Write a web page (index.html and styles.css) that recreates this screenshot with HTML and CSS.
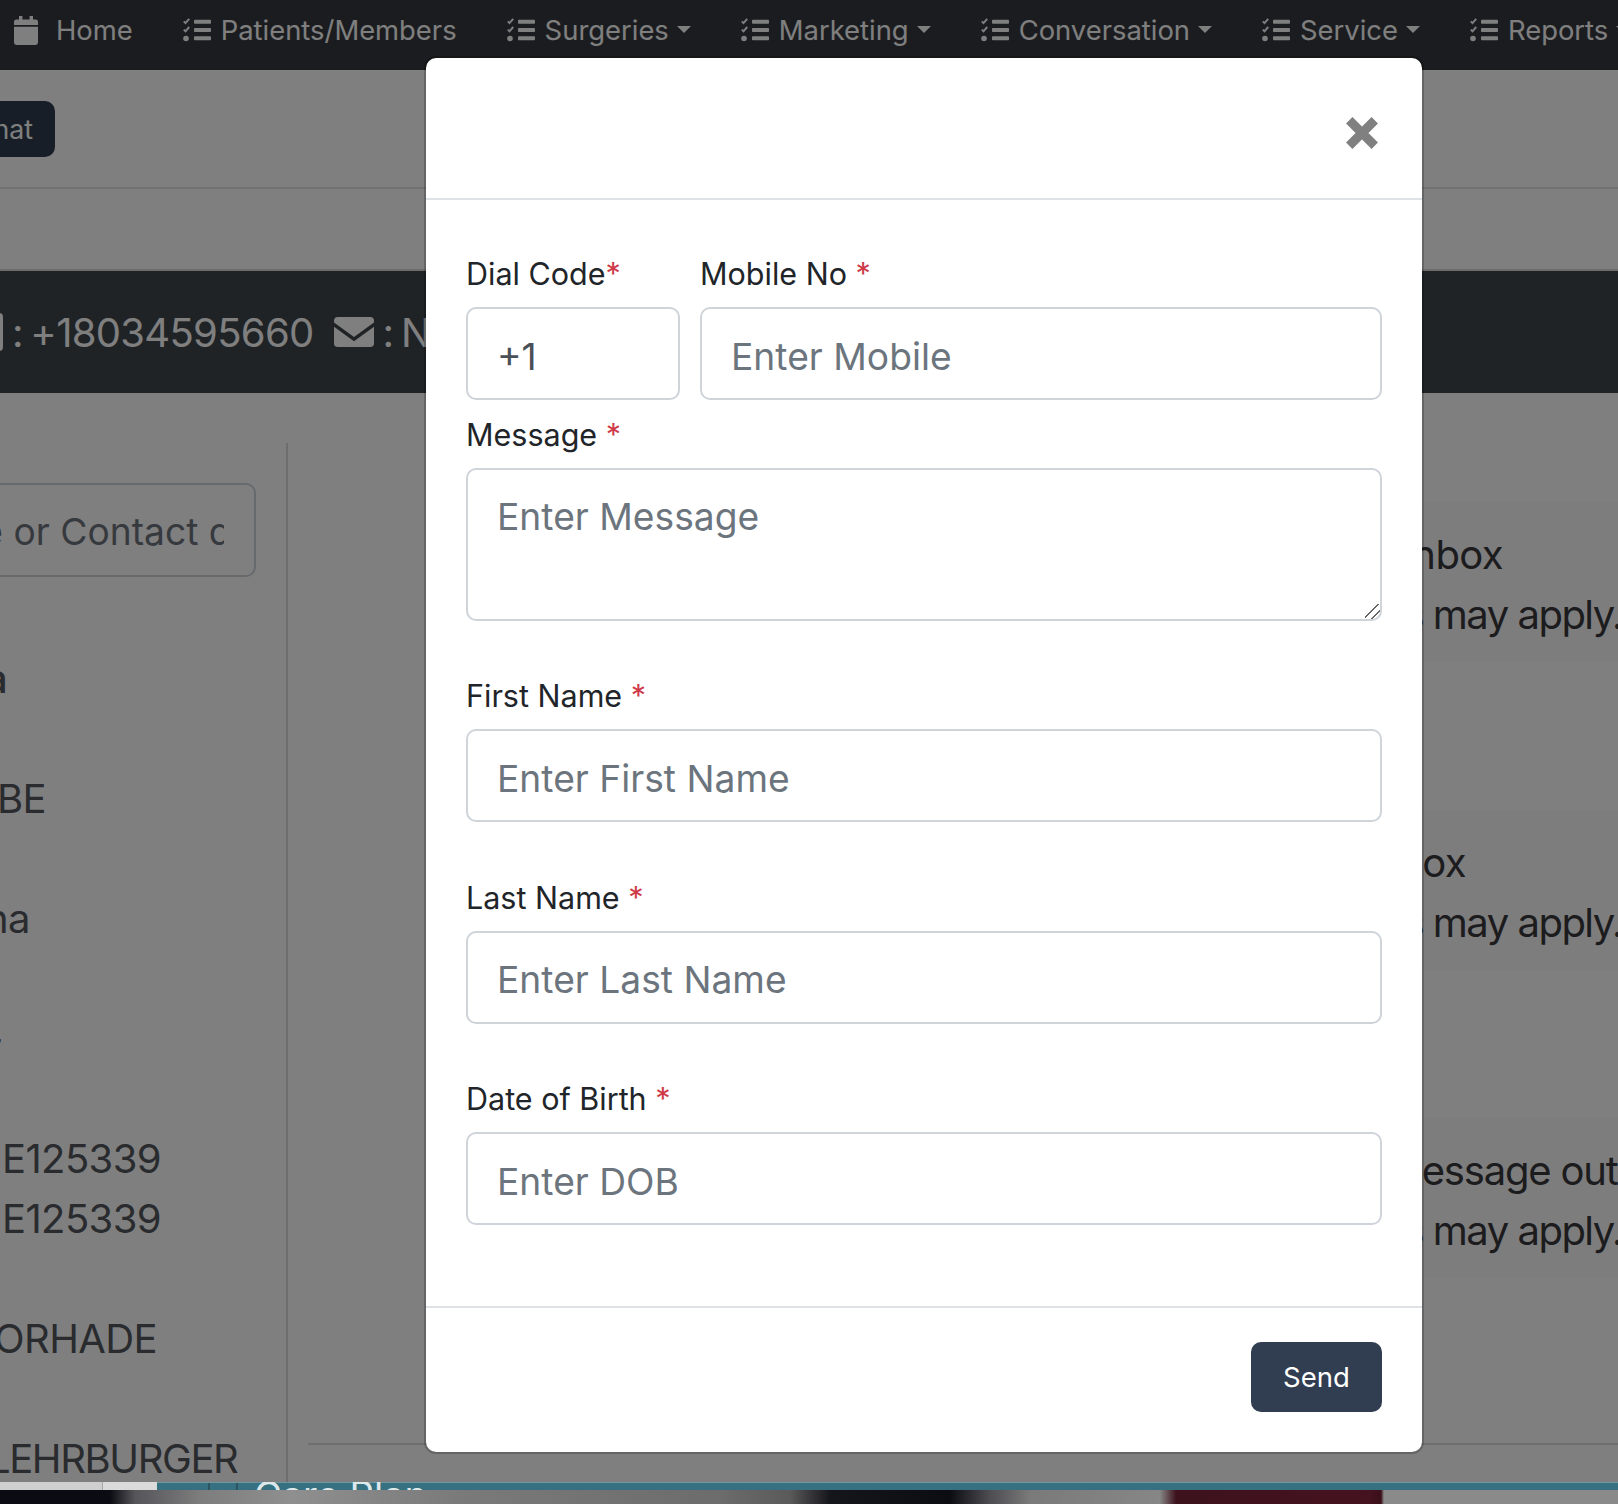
FILE: index.html
```html
<!DOCTYPE html>
<html lang="en">
<head>
<meta charset="utf-8">
<title>Chat</title>
<link rel="stylesheet" href="styles.css">
</head>
<body>
<svg class="defs" width="0" height="0" aria-hidden="true">
  <symbol id="tasks" viewBox="0 0 28 24">
    <path d="M.8 3.400l1.700 1.700L6.200.8" fill="none" stroke="currentColor" stroke-width="2"/>
    <path d="M.8 11.600l1.700 1.700L6.200 9" fill="none" stroke="currentColor" stroke-width="2"/>
    <circle cx="3" cy="20.500" r="2.800" fill="currentColor"/>
    <rect x="11" y="1.800" width="17" height="4" rx=".8" fill="currentColor"/>
    <rect x="11" y="10" width="17" height="4" rx=".8" fill="currentColor"/>
    <rect x="11" y="18.200" width="17" height="4" rx=".8" fill="currentColor"/>
  </symbol>
</svg>
<div class="page">
  <div class="app">
    <nav class="nav">
      <a class="nav-item nav-home">
        <svg class="ico-cal" viewBox="0 0 24 29"><path fill="currentColor" d="M5 0h3.400v3.400h7.200V0H19v3.400h2.600A2.400 2.400 0 0 1 24 5.800V9H0V5.800a2.400 2.400 0 0 1 2.400-2.400H5zM0 10.800h24v15.800a2.400 2.400 0 0 1-2.400 2.400H2.400A2.400 2.400 0 0 1 0 26.600z"/></svg>
        <span>Home</span>
      </a>
      <a class="nav-item"><svg class="ico-tasks"><use href="#tasks"/></svg><span>Patients/Members</span></a>
      <a class="nav-item"><svg class="ico-tasks"><use href="#tasks"/></svg><span>Surgeries</span><i class="caret"></i></a>
      <a class="nav-item"><svg class="ico-tasks"><use href="#tasks"/></svg><span>Marketing</span><i class="caret"></i></a>
      <a class="nav-item"><svg class="ico-tasks"><use href="#tasks"/></svg><span>Conversation</span><i class="caret"></i></a>
      <a class="nav-item"><svg class="ico-tasks"><use href="#tasks"/></svg><span>Service</span><i class="caret"></i></a>
      <a class="nav-item"><svg class="ico-tasks"><use href="#tasks"/></svg><span>Reports</span><i class="caret"></i></a>
    </nav>

    <div class="toolbar"><button class="chat-btn">New Chat</button></div>

    <div class="contact-bar">
      <svg class="ico-mobile" viewBox="0 0 23 38"><rect width="23" height="38" rx="4" fill="currentColor"/></svg>
      <span class="contact-phone">: +18034595660</span>
      <svg class="ico-mail" viewBox="0 0 40 30"><path fill="currentColor" d="M3.800 0h32.400A3.800 3.800 0 0 1 40 3.800v1.600L20 20 0 5.400V3.800A3.800 3.800 0 0 1 3.800 0zM0 9.700l20 14.600L40 9.700v16.500a3.800 3.800 0 0 1-3.800 3.800H3.800A3.800 3.800 0 0 1 0 26.200z"/></svg>
      <span class="contact-mail">: N/A</span>
    </div>

    <div class="content">
      <aside class="sidebar">
        <input class="search" placeholder="Search Name or Contact details" readonly>
        <div class="list">
          <div class="row row-first row-bold shift-a">a</div>
          <div class="row shift-be">BE</div>
          <div class="row shift-na">na</div>
          <div class="row shift-dash">-</div>
          <div class="row shift-e">E125339</div>
          <div class="row row-sub shift-e">E125339</div>
          <div class="row shift-o">ORHADE</div>
          <div class="row shift-l">LEHRBURGER</div>
        </div>
      </aside>
      <main class="main">
        <div class="card">
          <p class="line end-inbox">Message sent to inbox</p>
          <p class="line end-apply">Message and data rates may apply.</p>
        </div>
        <div class="card">
          <p class="line end-box">Message sent to inbox</p>
          <p class="line end-apply">Message and data rates may apply.</p>
        </div>
        <div class="card">
          <p class="line end-outs">You cannot send a message outside</p>
          <p class="line end-apply">Message and data rates may apply.</p>
        </div>
        <hr class="main-rule">
      </main>
    </div>

    <div class="backdrop"></div>

    <section class="modal">
      <header class="modal-header">
        <svg class="ico-close" viewBox="0 0 32 32"><path d="M4 4l24 24M28 4L4 28" fill="none" stroke="currentColor" stroke-width="8.500"/></svg>
      </header>
      <form class="modal-body">
        <div class="pair">
          <div class="field field-dial">
            <label class="label">Dial Code<span class="req">*</span></label>
            <input class="control" value="+1">
          </div>
          <div class="field field-mobile">
            <label class="label">Mobile No <span class="req">*</span></label>
            <input class="control" placeholder="Enter Mobile">
          </div>
        </div>
        <div class="field field-message">
          <label class="label">Message <span class="req">*</span></label>
          <textarea class="control control-area" placeholder="Enter Message"></textarea>
        </div>
        <div class="field field-spaced">
          <label class="label">First Name <span class="req">*</span></label>
          <input class="control" placeholder="Enter First Name">
        </div>
        <div class="field field-spaced">
          <label class="label">Last Name <span class="req">*</span></label>
          <input class="control" placeholder="Enter Last Name">
        </div>
        <div class="field field-spaced">
          <label class="label">Date of Birth <span class="req">*</span></label>
          <input class="control" placeholder="Enter DOB">
        </div>
      </form>
      <footer class="modal-footer"><button class="send" type="button">Send</button></footer>
    </section>
  </div>

  <div class="strip">
    <div class="strip-a"></div>
    <div class="strip-b"></div>
    <div class="strip-teal">
      <span class="strip-icon"></span>
      <span class="strip-text">Care Plan</span>
    </div>
  </div>
  <div class="photo"></div>
</div>
</body>
</html>
```
FILE: styles.css
```css
* { box-sizing: border-box; }
html, body { margin: 0; height: 100%; overflow: hidden; }
body { font-family: Inter, "Liberation Sans", sans-serif; color: #212529; background: #fff; }
.defs { position: absolute; }

.page { width: 1618px; height: 1504px; display: flex; flex-direction: column; overflow: hidden; }
.app { position: relative; height: 1482px; flex: none; overflow: hidden; background: #fff; }

/* nav */
.nav { height: 70px; background: #36383f; color: #fff; display: flex; align-items: center; gap: 50px; padding: 0 0 10px 14px; white-space: nowrap; font-size: 27.4px; }
.nav-item { display: flex; align-items: center; gap: 10px; flex: none; }
.nav-home { gap: 18px; }
.ico-cal { width: 24px; height: 29px; }
.ico-tasks { width: 28px; height: 24px; }
.caret { width: 0; height: 0; border-left: 7px solid transparent; border-right: 7px solid transparent; border-top: 7.500px solid currentColor; margin-left: -2px; margin-top: -2px; }

/* toolbar */
.toolbar { height: 119px; border-bottom: 2px solid #e2e2e2; padding-top: 31px; }
.chat-btn { height: 56px; width: 160px; margin-left: -105px; border: 0; border-radius: 10px; background: #313d50; color: #fff; font: 26.67px Inter, sans-serif; text-align: right; padding: 0 22px 0 0; display: block; }

/* contact */
.contact-bar { margin-top: 80px; height: 124px; border-top: 2px solid #d8d8d8; background: #3f464c; color: #fff; display: flex; align-items: center; font-size: 40px; letter-spacing: -.7px; word-spacing: -3px; white-space: nowrap; }
.ico-mobile { width: 23px; height: 38px; margin-left: -20px; flex: none; }
.contact-phone { margin-left: 9px; }
.ico-mail { width: 40px; height: 30px; margin-left: 20px; flex: none; }
.contact-mail { margin-left: 9px; }

/* content */
.content { display: flex; margin-top: 50px; height: 1039px; }
.sidebar { width: 288px; flex: none; border-right: 2px solid #dcdcdc; padding-top: 40px; }
.search { display: block; width: 522px; height: 94px; margin-left: -266px; border: 2px solid #ced4da; border-radius: 10px; padding: 3px 30px 0; font: 37.200px Inter, sans-serif; background: #fff; outline: 0; }
.search::placeholder { color: #6c757d; opacity: 1; }
.list { margin-top: 72px; font-size: 40px; letter-spacing: -.6px; line-height: 60px; color: #53575c; white-space: nowrap; }
.row { margin-top: 60px; }
.row-first, .row-sub { margin-top: 0; }
.row-bold { font-weight: 500; }
.shift-a { margin-left: -15px; }
.shift-be { margin-left: -3px; }
.shift-na { margin-left: -15px; }
.shift-dash { margin-left: -15px; }
.shift-e { margin-left: 2px; }
.shift-o { margin-left: -6px; }
.shift-l { margin-left: -12px; letter-spacing: -1.4px; }

.main { flex: 1; min-width: 0; margin-left: 20px; padding-top: 59px; }
.card { height: 160px; margin-left: 200px; padding: 23px 0 0; background: #fafafb; margin-bottom: 148px; }
.line { margin: 0; font-size: 40px; letter-spacing: -.6px; line-height: 60px; white-space: nowrap; display: flex; justify-content: flex-end; color: #38383c; }
.end-apply { margin-right: -4px; letter-spacing: -1.5px; }
.end-inbox { margin-right: 115px; }
.end-box { margin-right: 152px; }
.end-outs { margin-right: -73px; letter-spacing: -1.2px; }
.main-rule { margin: 165px 0 0; border: 0; border-top: 2px solid #dcdcdc; }

/* modal */
.backdrop { position: absolute; inset: 0; background: rgba(0, 0, 0, .5); }
.modal { position: absolute; left: 424px; top: 56px; width: 1000px; height: 1398px; display: flex; flex-direction: column; background: #fff; background-clip: padding-box; border: 2px solid rgba(0, 0, 0, .2); border-radius: 12px; }
.modal-header { height: 142px; flex: none; border-bottom: 2px solid #dee2e6; display: flex; align-items: center; justify-content: flex-end; padding: 10px 43px 0 0; color: #808080; }
.ico-close { width: 34px; height: 34px; }
.modal-body { flex: 1; padding: 54px 40px 0; }
.pair { display: flex; gap: 20px; }
.field-dial { width: 214px; flex: none; }
.field-mobile { flex: 1; }
.field-message { margin-top: 15px; }
.field-spaced { margin-top: 55.400px; }
.label { display: block; height: 40px; margin-bottom: 13px; font-size: 30.500px; line-height: 40px; color: #212529; }
.req { color: #cf3a48; }
.control { display: block; width: 100%; height: 93px; border: 2px solid #ced4da; border-radius: 10px; background: #fff; padding: 5px 29px 0; font: 37.200px Inter, sans-serif; color: #495057; outline: 0; }
.control::placeholder { color: #6c757d; opacity: 1; }
.control-area { height: 153px; padding: 22px 29px; line-height: 50px; resize: vertical; }
.control-area::-webkit-resizer { background: linear-gradient(135deg, transparent 42%, #666 42% 49%, transparent 49% 68%, #666 68% 75%, transparent 75%); }
.modal-footer { height: 146px; flex: none; border-top: 2px solid #dee2e6; display: flex; justify-content: flex-end; align-items: flex-start; padding: 34px 40px 0 0; }
.send { width: 131px; height: 70px; border: 0; border-radius: 10px; background: #313d50; color: #fff; font: 27.500px Inter, sans-serif; }

/* bottom */
.strip { height: 8px; flex: none; display: flex; overflow: hidden; }
.strip-a { width: 103px; background: #cfcfcf; border-right: 1px solid #a8a8a8; }
.strip-b { width: 54px; background: #dadada; }
.strip-teal { flex: 1; background: #367181; border-top: 1px solid #6f97a2; color: #dde8eb; display: flex; align-items: flex-start; padding-left: 51px; }
.strip-icon { width: 30px; height: 8px; border-left: 2px solid #2c5560; border-right: 2px solid #2c5560; flex: none; }
.strip-text { margin: -2px 0 0 16px; font-size: 38px; line-height: 28px; white-space: nowrap; }
.photo { flex: 1; background: linear-gradient(90deg, #0b0b13 0, #0b0b13 110px, #55555a 135px, #7d7d7d 200px, #8f8f8f 290px, #7a7a7a 460px, #6c6c6c 720px, #5a5a5a 790px, #15151c 830px, #0c0c13 950px, #4d4d52 990px, #7a7a7a 1030px, #868686 1160px, #3d121c 1176px, #45121f 1370px, #3a1019 1381px, #8a8a8a 1384px, #8a8a8a 1618px); }
```
